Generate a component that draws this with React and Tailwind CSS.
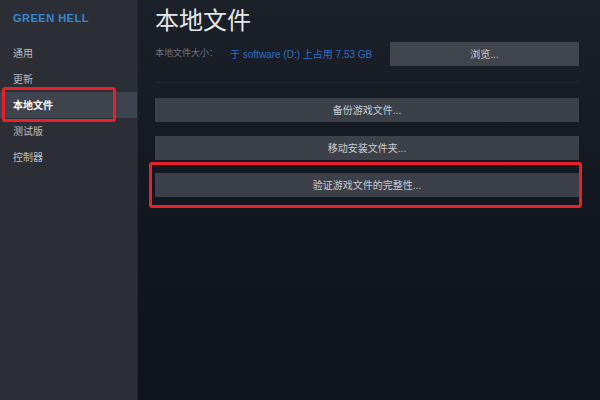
const menu = ['通用', '更新', '本地文件', '测试版', '控制器'];

const actions = ['备份游戏文件...', '移动安装文件夹...'];

export default function App() {
  return (
    <div className="flex h-[400px] w-[600px] overflow-hidden font-['Liberation_Sans','Noto_Sans_CJK_SC',sans-serif]">
      {/* sidebar */}
      <aside className="w-[138px] shrink-0 bg-[#2b2e34] border-r border-[#24272c]">
        <div className="h-[40px] pl-[13px] pt-[10px] text-[11px] font-bold tracking-[0.5px] text-[#3a87d2]">
          GREEN HELL
        </div>
        <ul>
          {menu.map((item) => (
            <li
              key={item}
              className={
                item === '本地文件'
                  ? 'relative flex h-[26px] items-center pl-[13px] text-[10px] font-bold text-white bg-[#3e444e]'
                  : 'flex h-[26px] items-center pl-[13px] text-[10px] text-[#b9bec4]'
              }
            >
              {item}
              {item === '本地文件' && (
                <span className="absolute left-[2px] top-[-5px] h-[35px] w-[114px] rounded-[3px] border-[3px] border-[#e8202a]" />
              )}
            </li>
          ))}
        </ul>
      </aside>

      {/* main */}
      <main className="flex-1 bg-gradient-to-b from-[#1b2029] via-[#121720] to-[#0f141b] pl-[17px] pr-[21px]">
        <h1 className="mt-[6px] h-[30px] text-[24px] leading-[30px] text-[#e4e7ea]">本地文件</h1>
        <div className="mt-[6px] flex h-[24px] items-center">
          <span className="w-[75px] text-[9px] text-[#6c747e]">本地文件大小：</span>
          <span className="w-[160px] text-[10px] text-[#2f6fc4]">于 software (D:) 上占用 7.53 GB</span>
          <button className="flex h-[24px] flex-1 items-center justify-center bg-[#3f444d] text-[10px] text-[#c9cdd2]">
            浏览...
          </button>
        </div>
        <div className="mt-[16px] h-px bg-[#232830]" />
        <div className="mt-[15px] flex flex-col gap-[14px]">
          {actions.map((a) => (
            <button
              key={a}
              className="flex h-[24px] items-center justify-center bg-[#3b4049] text-[10px] text-[#c9cdd2]"
            >
              {a}
            </button>
          ))}
        </div>
        <div className="ml-[-6px] mr-[-3px] mt-[2px] rounded-[3px] border-[3px] border-[#e8202a] pb-[8px] pl-[3px] pt-[8px]">
          <button className="flex h-[24px] w-full items-center justify-center bg-[#3b4049] text-[10px] text-[#c9cdd2]">
            验证游戏文件的完整性...
          </button>
        </div>
      </main>
    </div>
  );
}
